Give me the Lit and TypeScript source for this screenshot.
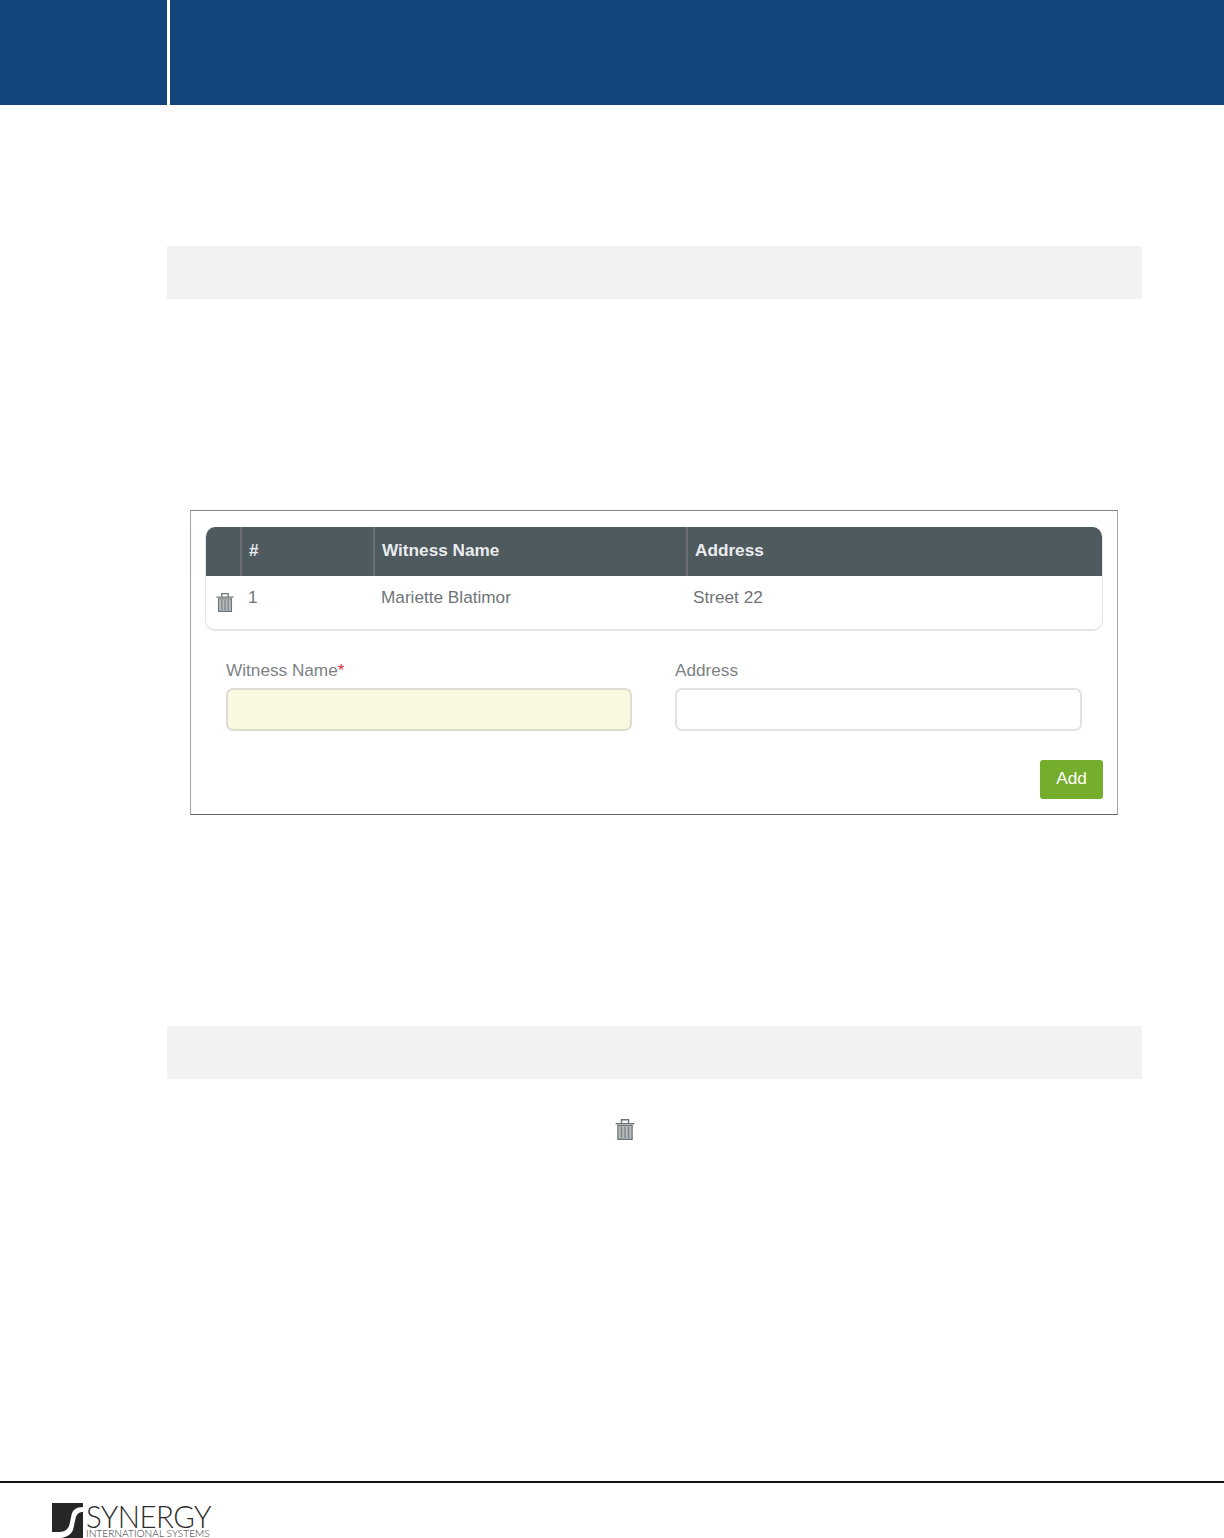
import { LitElement, html, css, svg } from "lit";
import { customElement } from "lit/decorators.js";

const trash = (cls: string) => html`<svg class=${cls} viewBox="0 0 18 20" aria-hidden="true">
  ${svg`<path d="M0.5 5.2h17M5.8 4.8V1.6h6.4v3.2" fill="none" stroke="#6f7577" stroke-width="1.3"/>
  <path d="M2.5 6.8h13V19.4H2.5z" fill="#b4b8ba" stroke="#6f7577" stroke-width="1.1"/>
  <path d="M5.8 8v10M9 8v10M12.2 8v10" stroke="#7d8385" stroke-width="1.2"/>`}
</svg>`;

@customElement("app-root")
export class AppRoot extends LitElement {
  static styles = css`
    :host { display: block; width: 1224px; height: 1538px; background: #fff; overflow: hidden;
      font-family: "Liberation Sans", Arial, sans-serif; }
    .top { display: flex; gap: 3px; height: 105px; }
    .top div { background: #14447c; }
    .top .a { width: 167px; }
    .top .b { flex: 1; }
    .body { padding: 141px 82px 0 167px; }
    .bar { height: 53px; background: #f2f2f2; }
    .figure { box-sizing: border-box; width: 928px; height: 305px; margin: 211px 0 211px 23px;
      border: 1px solid #a3a3a3; border-top-color: #808080; border-bottom-color: #666; padding: 16px 14px 0 14px; }
    .table { box-sizing: border-box; height: 104px; border: 1px solid #e4e6e6; border-bottom-width: 2px; border-top: 0;
      border-radius: 10px; overflow: hidden; }
    .row { display: grid; grid-template-columns: 34px 133px 313px 1fr; }
    .head { height: 49px; background: #4e5a5e; color: #e9eced; font-weight: 700; font-size: 17.2px; line-height: 47px; }
    .head > div { box-sizing: border-box; padding-left: 7px; border-left: 2px solid #6b7174; }
    .head > div:first-child { border-left: 0; }
    .data { color: #6f7478; font-size: 17.2px; line-height: 20px; padding-top: 11px; }
    .data > div { padding-left: 8px; }
    .data > div:nth-child(3) { padding-left: 8px; }
    .data > div:nth-child(4) { padding-left: 7px; }
    .data > .ic { padding-left: 10px; }
    .t1 { display: block; width: 18px; height: 20px; margin-top: 5px; }
    .form { display: grid; grid-template-columns: 406px 407px; column-gap: 43px; padding: 29px 7px 0 21px; }
    label { display: block; color: #7d8286; font-size: 17.2px; line-height: 20px; margin-bottom: 8px; }
    label span { color: #d0303f; }
    .in { box-sizing: border-box; height: 43px; border: 2px solid #e2e2e2; border-radius: 7px; background: #fff; }
    .in.req { background: #faf8df; border-color: #dcdcd2; }
    .act { display: flex; justify-content: flex-end; margin-top: 29px; }
    .add { box-sizing: border-box; width: 63px; height: 39px; border-radius: 3px; background: #75ad2c; color: #fff;
      font-size: 17.2px; line-height: 37px; text-align: center; }
    .note { display: flex; padding: 39px 0 0 448px; }
    .t2 { display: block; width: 20px; height: 22px; }
    .foot { margin-top: 341px; border-top: 2px solid #111; padding: 20px 0 0 52px; display: flex; align-items: flex-start; height: 35px; overflow: hidden; }
    .mark { width: 31px; height: 35px; flex: none; }
    .brand { margin-left: 3px; color: #2c2c2c; font-family: Lato, sans-serif; font-weight: 300; }
    .brand b { display: block; font-weight: 300; font-size: 32px; line-height: 26px; letter-spacing: -0.6px; transform: scaleX(0.92); transform-origin: left center; white-space: nowrap; }
    .brand i { display: block; font-style: normal; font-size: 10.2px; line-height: 9px; white-space: nowrap; }
  `;

  render() {
    return html`
      <div class="top"><div class="a"></div><div class="b"></div></div>
      <div class="body">
        <div class="bar"></div>
        <div class="figure">
          <div class="table">
            <div class="row head"><div></div><div>#</div><div>Witness Name</div><div>Address</div></div>
            <div class="row data">
              <div class="ic">${trash("t1")}</div><div>1</div><div>Mariette Blatimor</div><div>Street 22</div>
            </div>
          </div>
          <div class="form">
            <div><label>Witness Name<span>*</span></label><div class="in req"></div></div>
            <div><label>Address</label><div class="in"></div></div>
          </div>
          <div class="act"><div class="add">Add</div></div>
        </div>
        <div class="bar"></div>
        <div class="note">${trash("t2")}</div>
      </div>
      <div class="foot">
        <svg class="mark" viewBox="0 0 31 35" aria-hidden="true">
          <path fill="#262626" d="M0 0H31V4C24 4 20.5 7 19.5 12L17.5 21.5C16.5 26 13 29 7 29H0Z"/>
          <path fill="#262626" d="M31 9C26.5 9 24.5 11.5 23.5 15.5L21.5 25C20.5 30.5 16 34 9 35H31Z"/>
        </svg>
        <div class="brand"><b>SYNERGY</b><i>INTERNATIONAL SYSTEMS</i></div>
      </div>
    `;
  }
}
